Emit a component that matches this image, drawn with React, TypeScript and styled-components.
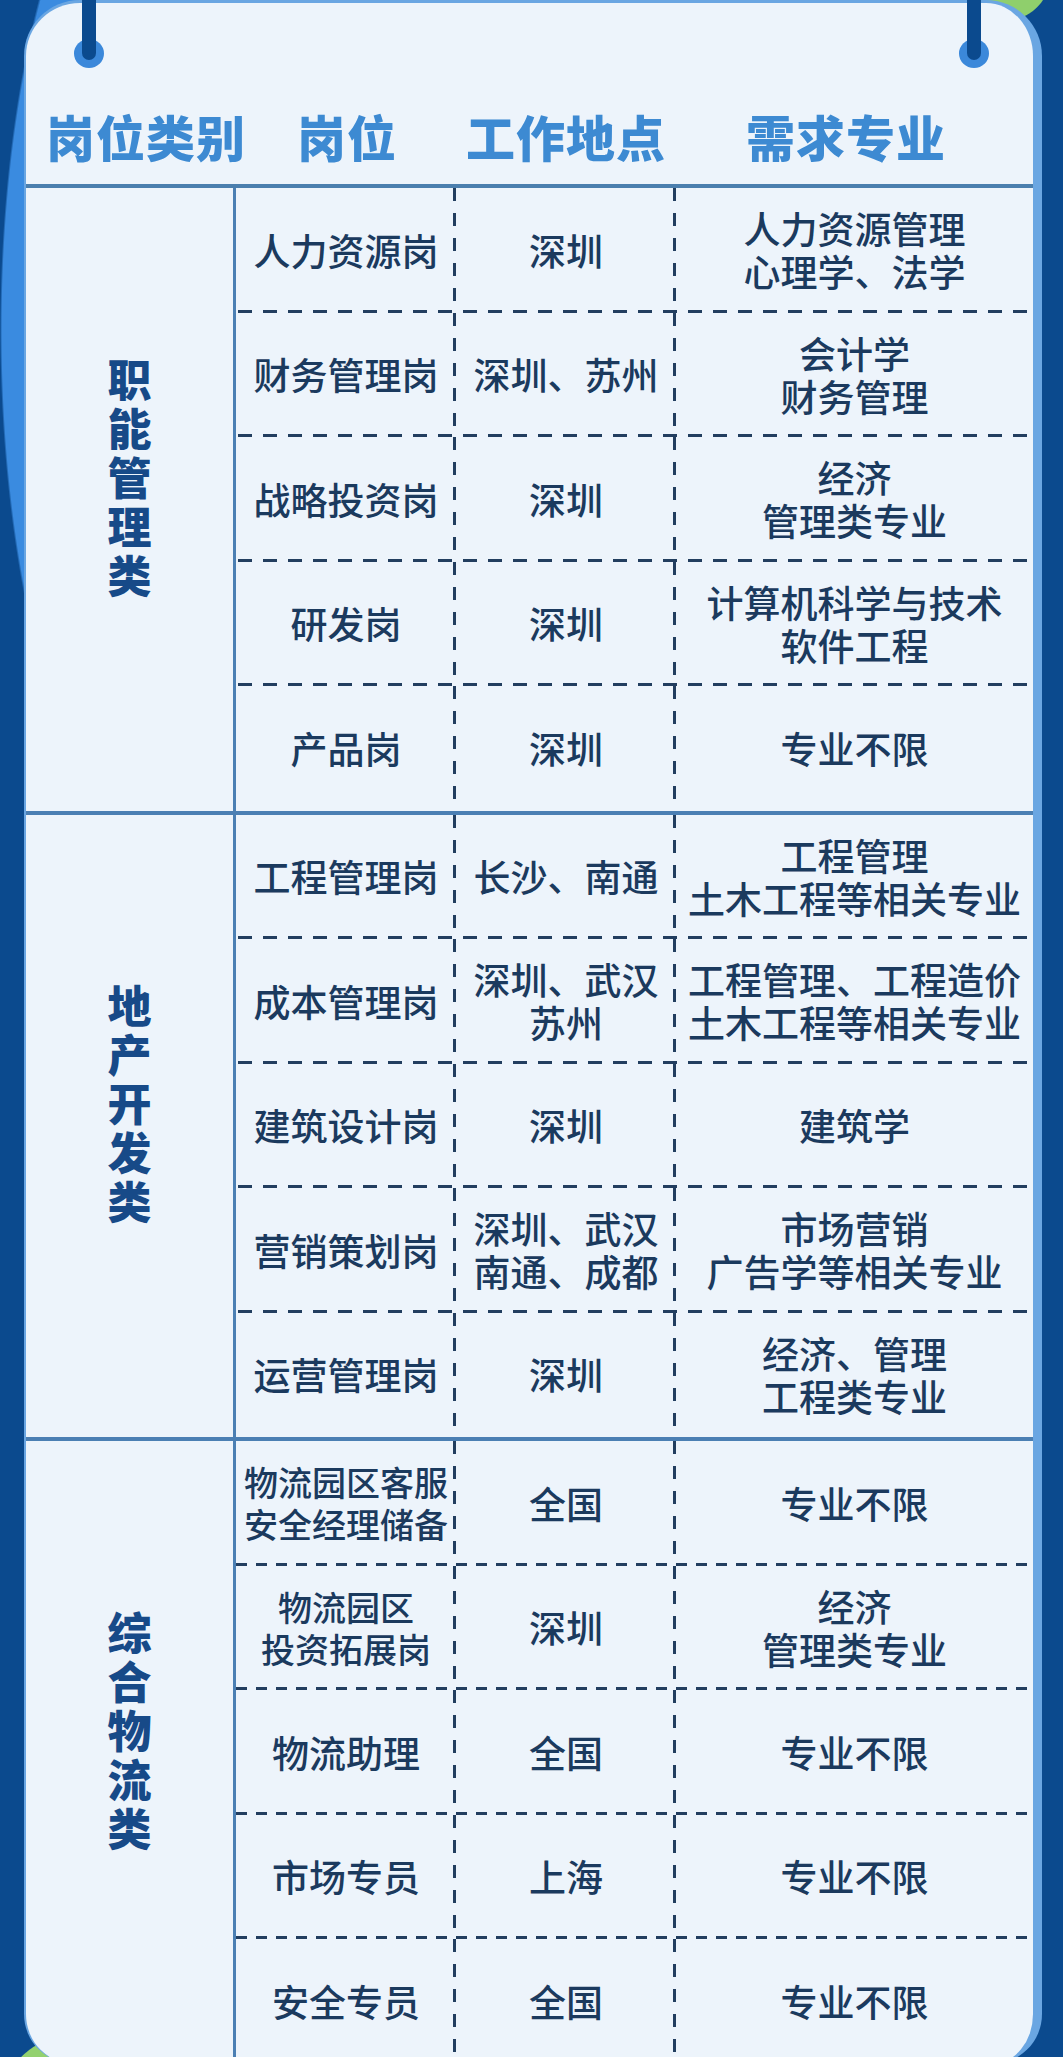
import { createGlobalStyle, styled } from 'styled-components';

interface JobRow {
  job: string[];
  place: string[];
  major: string[];
  compact?: boolean;
}

interface JobGroup {
  name: string;
  dense?: boolean;
  rows: JobRow[];
}

const groups: JobGroup[] = [
  {
    name: '职能管理类',
    rows: [
      { job: ['人力资源岗'], place: ['深圳'], major: ['人力资源管理', '心理学、法学'] },
      { job: ['财务管理岗'], place: ['深圳、苏州'], major: ['会计学', '财务管理'] },
      { job: ['战略投资岗'], place: ['深圳'], major: ['经济', '管理类专业'] },
      { job: ['研发岗'], place: ['深圳'], major: ['计算机科学与技术', '软件工程'] },
      { job: ['产品岗'], place: ['深圳'], major: ['专业不限'] },
    ],
  },
  {
    name: '地产开发类',
    rows: [
      { job: ['工程管理岗'], place: ['长沙、南通'], major: ['工程管理', '土木工程等相关专业'] },
      {
        job: ['成本管理岗'],
        place: ['深圳、武汉', '苏州'],
        major: ['工程管理、工程造价', '土木工程等相关专业'],
      },
      { job: ['建筑设计岗'], place: ['深圳'], major: ['建筑学'] },
      {
        job: ['营销策划岗'],
        place: ['深圳、武汉', '南通、成都'],
        major: ['市场营销', '广告学等相关专业'],
      },
      { job: ['运营管理岗'], place: ['深圳'], major: ['经济、管理', '工程类专业'] },
    ],
  },
  {
    name: '综合物流类',
    dense: true,
    rows: [
      {
        job: ['物流园区客服', '安全经理储备'],
        place: ['全国'],
        major: ['专业不限'],
        compact: true,
      },
      {
        job: ['物流园区', '投资拓展岗'],
        place: ['深圳'],
        major: ['经济', '管理类专业'],
        compact: true,
      },
      { job: ['物流助理'], place: ['全国'], major: ['专业不限'] },
      { job: ['市场专员'], place: ['上海'], major: ['专业不限'] },
      { job: ['安全专员'], place: ['全国'], major: ['专业不限'] },
    ],
  },
];

const headers = ['岗位类别', '岗位', '工作地点', '需求专业'];

const GlobalStyle = createGlobalStyle`
  html, body {
    margin: 0;
    padding: 0;
    height: 2057px;
    overflow: hidden;
  }
  body {
    font-family: "Noto Sans CJK SC", "Noto Sans", sans-serif;
  }
`;

const Page = styled.div`
  height: 2057px;
  overflow: hidden;
  background:
    radial-gradient(ellipse 200px 560px at 200px 330px, #3a8be0 0 99%, transparent 100%),
    radial-gradient(circle at 1005px -25px, #8fcf6c 0 45px, transparent 46px),
    radial-gradient(circle at 75px 2110px, #93d16f 0 75px, transparent 76px),
    #0b4a8e;
`;

const Card = styled.main`
  position: relative;
  margin: 0 21px 0 24px;
  background: #edf4fb;
  border: 3px solid #6aa6e2;
  border-left-width: 2px;
  border-right-width: 9px;
  border-bottom: none;
  border-radius: 56px 56px 50px 50px;
`;

const Hook = styled.span<{ $side: 'left' | 'right' }>`
  position: absolute;
  top: -3px;
  left: ${({ $side }) => ($side === 'left' ? '48px' : '933px')};
  width: 30px;
  height: 72px;

  &::before {
    content: '';
    position: absolute;
    left: 0;
    top: 39px;
    width: 30px;
    height: 29px;
    border-radius: 50%;
    background: #3b88da;
  }

  &::after {
    content: '';
    position: absolute;
    left: 8px;
    top: 0;
    width: 14px;
    height: 60px;
    border-radius: 0 0 7px 7px;
    background: #0b4a8e;
  }
`;

const HeaderRow = styled.header`
  display: grid;
  grid-template-columns: 240px 162px 276px 284px;
  align-items: end;
  height: 185px;
  box-sizing: border-box;
  border-bottom: 4px solid #4b7fae;
`;

const HeaderCell = styled.div`
  padding-bottom: 24px;
  text-align: center;
  font-size: 49px;
  line-height: 1;
  font-weight: 900;
  letter-spacing: 1px;
  color: #3d8ad2;
`;

const Group = styled.section<{ $last?: boolean }>`
  display: grid;
  grid-template-columns: 210px 1fr;
  border-bottom: ${({ $last }) => ($last ? 'none' : '4px solid #4b7fb3')};
`;

const Category = styled.div`
  display: flex;
  align-items: center;
  justify-content: center;
  padding-bottom: 38px;
  border-right: 3px solid #4b7fb3;
  writing-mode: vertical-rl;
  font-size: 44px;
  line-height: 1;
  letter-spacing: 5px;
  font-weight: 900;
  color: #174a88;
`;

const Rows = styled.div`
  display: flex;
  flex-direction: column;
`;

const Row = styled.div<{ $last?: boolean; $dense?: boolean }>`
  display: grid;
  grid-template-columns: 220px 220px 1fr;
  height: 124.5px;
  background: ${({ $last, $dense }) =>
    $last
      ? 'none'
      : $dense
        ? 'linear-gradient(to right, #223e5f 0 11px, transparent 11px) left bottom / 20px 3px repeat-x'
        : 'linear-gradient(to right, #223e5f 0 14px, transparent 14px) 2px bottom / 25px 3px repeat-x'};
`;

const Cell = styled.div<{ $divider?: boolean; $compact?: boolean }>`
  display: flex;
  align-items: center;
  justify-content: center;
  text-align: center;
  font-size: ${({ $compact }) => ($compact ? '34px' : '37px')};
  line-height: ${({ $compact }) => ($compact ? '42px' : '43px')};
  font-weight: 500;
  color: #1b3a5e;
  white-space: pre-line;
  background: ${({ $divider }) =>
    $divider
      ? 'linear-gradient(to bottom, #223e5f 0 13px, transparent 13px) right top / 3px 25px repeat-y'
      : 'none'};
`;

const App = () => {
  return (
    <>
      <GlobalStyle />
      <Page>
        <Card>
          <Hook $side="left" />
          <Hook $side="right" />
          <HeaderRow>
            {headers.map((h) => (
              <HeaderCell key={h}>{h}</HeaderCell>
            ))}
          </HeaderRow>
          {groups.map((group, gi) => (
            <Group key={group.name} $last={gi === groups.length - 1}>
              <Category>{group.name}</Category>
              <Rows>
                {group.rows.map((row, ri) => (
                  <Row
                    key={row.job.join()}
                    $last={ri === group.rows.length - 1}
                    $dense={group.dense}
                  >
                    <Cell $divider $compact={row.compact}>
                      {row.job.join('\n')}
                    </Cell>
                    <Cell $divider>{row.place.join('\n')}</Cell>
                    <Cell>{row.major.join('\n')}</Cell>
                  </Row>
                ))}
              </Rows>
            </Group>
          ))}
        </Card>
      </Page>
    </>
  );
};

export default App;
